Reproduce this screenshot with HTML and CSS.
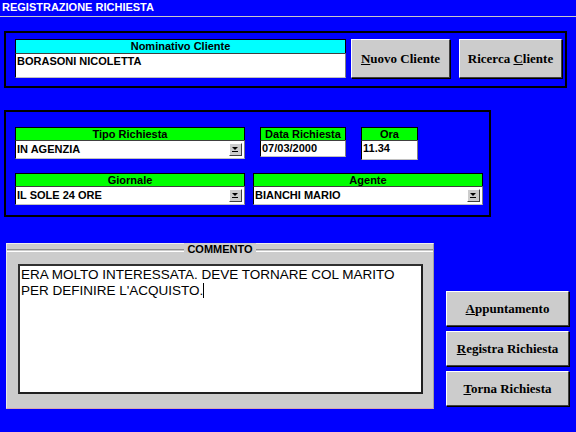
FILE: index.html
```html
<!DOCTYPE html>
<html lang="it">
<head>
    <meta charset="UTF-8">
    <title>Registrazione Richiesta</title>
    <link rel="stylesheet" href="styles.css">
</head>
<body>

<div class="titlebar">REGISTRAZIONE RICHIESTA</div>

<div class="panel panel-cliente">
    <div class="field field-nominativo">
        <div class="label cyan">Nominativo Cliente</div>
        <div class="value value-tall">BORASONI NICOLETTA</div>
    </div>
    <button class="btn btn-nuovo"><u>N</u>uovo Cliente</button>
    <button class="btn btn-ricerca">Ricerca <u>C</u>liente</button>
</div>

<div class="panel panel-richiesta">
    <div class="row">
        <div class="field field-wide">
            <div class="label green">Tipo Richiesta</div>
            <div class="value combo">IN AGENZIA<span class="arrow"></span></div>
        </div>
        <div class="field field-data">
            <div class="label green">Data Richiesta</div>
            <div class="value">07/03/2000</div>
        </div>
        <div class="field field-ora">
            <div class="label green">Ora</div>
            <div class="value value-ora">11.34</div>
        </div>
    </div>
    <div class="row row-second">
        <div class="field field-wide">
            <div class="label green">Giornale</div>
            <div class="value combo">IL SOLE 24 ORE<span class="arrow"></span></div>
        </div>
        <div class="field field-wide">
            <div class="label green">Agente</div>
            <div class="value combo">BIANCHI MARIO<span class="arrow"></span></div>
        </div>
    </div>
</div>

<div class="bottom">
    <div class="commento">
        <div class="group-title"><span>COMMENTO</span></div>
        <div class="memo">ERA MOLTO INTERESSATA. DEVE TORNARE COL MARITO<br>PER DEFINIRE L'ACQUISTO.<span class="caret"></span></div>
    </div>
    <div class="actions">
        <button class="btn btn-side"><u>A</u>ppuntamento</button>
        <button class="btn btn-side"><u>R</u>egistra Richiesta</button>
        <button class="btn btn-side"><u>T</u>orna Richiesta</button>
    </div>
</div>

</body>
</html>
```

FILE: styles.css
```css
body {
    margin: 0;
    width: 576px;
    height: 432px;
    overflow: hidden;
    background-color: #0000ff;
    font-family: "Liberation Sans", Arial, sans-serif;
    font-size: 11px;
}

.titlebar {
    height: 16px;
    padding-left: 2px;
    line-height: 15px;
    color: #fff;
    font-weight: bold;
    border-bottom: 1px solid #c8c8c8;
}

.panel {
    margin-left: 4px;
    border: 2px solid #000;
    box-sizing: border-box;
}

.panel-cliente {
    margin-top: 14px;
    width: 563px;
    height: 57px;
    display: flex;
    align-items: flex-start;
    padding: 6px 0 0 9px;
}

.field {
    display: flex;
    flex-direction: column;
}

.label {
    height: 12px;
    line-height: 12px;
    text-align: center;
    font-weight: bold;
    border: 1px solid #000;
    border-bottom: none;
}

.cyan {
    background-color: #00ffff;
}

.cyan.label {
    height: 13px;
    line-height: 13px;
}

.green {
    background-color: #00ff00;
}

.value {
    position: relative;
    height: 17px;
    line-height: 15px;
    padding-left: 1px;
    background-color: #fff;
    font-weight: bold;
    border: 1px solid #000;
    border-top-color: #404040;
    border-right-color: #808080;
    border-bottom-color: #c0c0c0;
    box-sizing: border-box;
}

.field-nominativo {
    width: 331px;
}

.value-tall {
    height: 25px;
}

.btn {
    background-color: #cccccc;
    font-family: "Liberation Serif", "Times New Roman", serif;
    font-weight: bold;
    font-size: 13px;
    color: #000;
    border: 1px solid;
    border-color: #fff #404040 #404040 #fff;
    box-shadow: 1px 1px 0 #000;
    padding: 0;
    cursor: pointer;
}

.btn-nuovo {
    margin-left: 5px;
    width: 99px;
    height: 39px;
}

.btn-ricerca {
    margin-left: 9px;
    width: 103px;
    height: 39px;
}

.panel-richiesta {
    margin-top: 22px;
    width: 487px;
    height: 107px;
    padding: 15px 0 0 9px;
}

.row {
    display: flex;
    align-items: flex-start;
    gap: 15px;
}

.row-second {
    margin-top: 13px;
    gap: 8px;
}

.field-wide {
    width: 230px;
}

.field-wide .value {
    height: 19px;
    line-height: 17px;
}

.field-data {
    width: 86px;
}

.field-ora {
    width: 57px;
}

.value-ora {
    height: 20px;
}

.arrow {
    position: absolute;
    right: 2px;
    top: 2px;
    width: 13px;
    height: 13px;
    box-sizing: border-box;
    background-color: #cccccc;
    border: 1px solid;
    border-color: #fff #404040 #404040 #fff;
}

.arrow::after {
    content: "";
    position: absolute;
    left: 2px;
    top: 3px;
    border-left: 3px solid transparent;
    border-right: 3px solid transparent;
    border-top: 3px solid #000;
}

.arrow::before {
    content: "";
    position: absolute;
    left: 2px;
    top: 7px;
    width: 6px;
    height: 1px;
    background-color: #000;
}

.bottom {
    margin-top: 26px;
    display: flex;
    align-items: flex-start;
}

.commento {
    margin-left: 6px;
    width: 428px;
    height: 166px;
    box-sizing: border-box;
    background-color: #cccccc;
    border: 1px solid;
    border-color: #eeeeee #a0a0a0 #d8a8b0 #e8e8e8;
    padding: 0 10px 0 11px;
}

.group-title {
    margin: 5px -10px 0 -11px;
    height: 1px;
    border-top: 1px solid #909090;
    border-bottom: 1px solid #fff;
    text-align: center;
    position: relative;
}

.group-title span {
    position: relative;
    top: -7px;
    padding: 0 3px;
    background-color: #cccccc;
    font-weight: bold;
    line-height: 13px;
}

.memo {
    margin-top: 12px;
    width: 405px;
    height: 130px;
    box-sizing: border-box;
    background-color: #fff;
    border: 2px solid #202020;
    border-top-color: #303030;
    border-left-color: #303030;
    padding: 1px 0 0 1px;
    font-size: 13.5px;
    line-height: 16px;
}

.caret {
    display: inline-block;
    width: 1px;
    height: 15px;
    vertical-align: -3px;
    background-color: #000;
}

.actions {
    margin-left: 12px;
    margin-top: 48px;
    display: flex;
    flex-direction: column;
    gap: 5px;
}

.btn-side {
    width: 123px;
    height: 35px;
}
```
